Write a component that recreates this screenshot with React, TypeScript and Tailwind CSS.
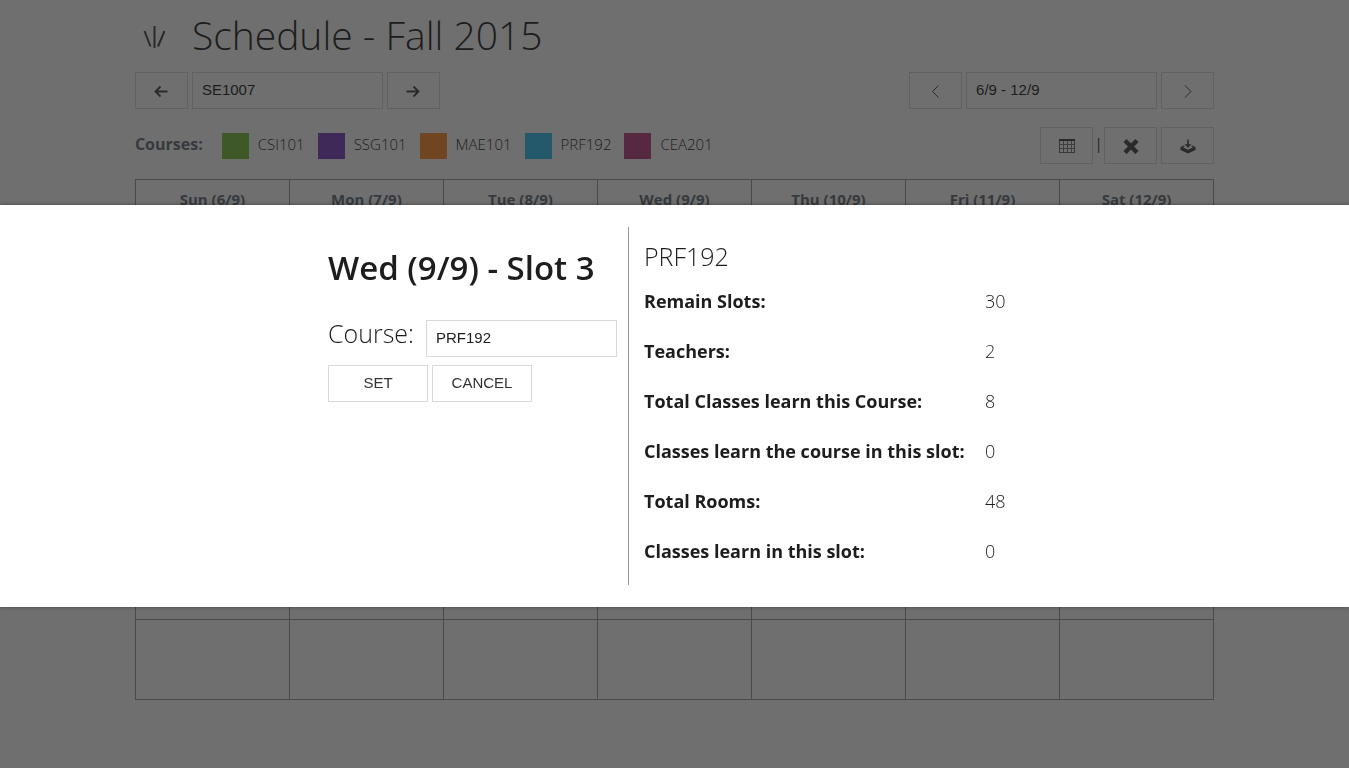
import type { ReactNode } from "react";

const courses = [
  { name: "CSI101", color: "bg-[#7dbf3b]" },
  { name: "SSG101", color: "bg-[#7a41bf]" },
  { name: "MAE101", color: "bg-[#ff8c2e]" },
  { name: "PRF192", color: "bg-[#30c4f4]" },
  { name: "CEA201", color: "bg-[#be4180]" },
];

const days = ["Sun (6/9)", "Mon (7/9)", "Tue (8/9)", "Wed (9/9)", "Thu (10/9)", "Fri (11/9)", "Sat (12/9)"];
const slots = [1, 2, 3, 4, 5, 6];

const stats = [
  ["Remain Slots:", "30"],
  ["Teachers:", "2"],
  ["Total Classes learn this Course:", "8"],
  ["Classes learn the course in this slot:", "0"],
  ["Total Rooms:", "48"],
  ["Classes learn in this slot:", "0"],
];

function IconButton({ label, children }: { label: string; children: ReactNode }) {
  return (
    <button type="button" aria-label={label} className="flex h-[37px] w-[53px] items-center justify-center border border-[#d9d9d9] bg-white text-[#444]">
      {children}
    </button>
  );
}

function Field({ id, label, value }: { id: string; label: string; value: string }) {
  return (
    <input
      id={id}
      aria-label={label}
      defaultValue={value}
      className="h-[37px] w-[191px] border border-[#d9d9d9] bg-white px-[9px] pb-[3px] font-['Liberation_Sans',sans-serif] text-[15px] leading-5 text-[#1d1d1d] outline-none"
    />
  );
}

export default function App() {
  return (
    <div className="min-h-screen bg-white font-['Open_Sans',sans-serif] text-[#1d1d1d]">
      <main className="mx-auto w-4/5">
        <h1 className="flex h-[72px] items-center pb-[2px] text-[39px] leading-[70px] font-light">
          <a href="#home" aria-label="Home" className="mr-[25px] ml-2 text-[#444]">
            <svg width="24" height="26" viewBox="0 0 24 26" fill="none" stroke="currentColor" strokeWidth="2">
              <path d="M1.500 9l6 15.500M11.500 4v22M21.500 9l-6.500 15.500" />
            </svg>
          </a>
          Schedule - Fall 2015
        </h1>
        <div className="flex justify-between">
          <div className="flex gap-1">
            <IconButton label="Previous class">
              <svg width="16" height="16" viewBox="0 0 16 16" fill="none" stroke="currentColor" strokeWidth="1.8">
                <path d="M14.500 8.500H2.500M7.500 3.500l-5 5 5 5" />
              </svg>
            </IconButton>
            <Field id="class" label="Class" value="SE1007" />
            <IconButton label="Next class">
              <svg width="16" height="16" viewBox="0 0 16 16" fill="none" stroke="currentColor" strokeWidth="1.8">
                <path d="M1.500 8.500h12M8.500 3.500l5 5-5 5" />
              </svg>
            </IconButton>
          </div>
          <div className="flex gap-1">
            <IconButton label="Previous week">
              <svg width="16" height="16" viewBox="0 0 16 16" fill="none" stroke="currentColor"><path d="M10.500 2.500l-6 6 6 6" /></svg>
            </IconButton>
            <Field id="week" label="Week" value="6/9 - 12/9" />
            <IconButton label="Next week">
              <svg width="16" height="16" viewBox="0 0 16 16" fill="none" stroke="currentColor"><path d="M5 2.500l6 6-6 6" /></svg>
            </IconButton>
          </div>
        </div>
        <div className="mt-[18px] flex justify-between">
          <div className="flex h-[37px] items-center text-[15px] font-light">
            <strong className="mr-[19px] pb-[3px] text-base font-bold text-[#646e78]">Courses:</strong>
            {courses.map((c) => (
              <span key={c.name} className="mr-[13px] flex items-center gap-[9px]">
                <span className={`h-[26px] w-[27px] ${c.color}`} />
                <span className="pb-[3px]">{c.name}</span>
              </span>
            ))}
          </div>
          <div className="flex">
            <IconButton label="Show table">
              <svg width="16" height="14" viewBox="0 0 16 14" fill="none" stroke="currentColor" shapeRendering="crispEdges">
                <path d="M4.500 2v11M8.500 2v11M12.500 2v11M1 5.500h14M1 9.500h14" strokeOpacity=".7" />
                <path d="M.5 1v12.500h15V1" strokeOpacity=".8" />
                <path d="M0 1h16" strokeWidth="2" />
              </svg>
            </IconButton>
            <span className="w-[11px] text-center text-sm leading-[34px]">|</span>
            <IconButton label="Clear">
              <svg width="16" height="16" viewBox="0 0 16 16" stroke="currentColor" strokeWidth="4.500"><path d="M2 2.500l12 12M14 2.500l-12 12" /></svg>
            </IconButton>
            <span className="w-1" />
            <IconButton label="Save">
              <svg width="16" height="16" viewBox="0 0 16 16" fill="currentColor">
                <path d="M7.200 1.500h1.600v4.800h2.700L8 9.800 4.500 6.300h2.700z" />
                <path d="M3.800 7.500L.5 9v3L8 15.500l7.500-3.500V9l-3.300-1.500-1 .9 2 .9L8 11.700 2.800 9.300l2-.9z" />
              </svg>
            </IconButton>
          </div>
        </div>
        <table className="mt-[15px] w-full table-fixed border-collapse">
          <thead>
            <tr className="h-10">
              {days.map((d) => (
                <th key={d} className="border border-[#999] p-0 text-[15px] font-bold text-[#646e78]">{d}</th>
              ))}
            </tr>
          </thead>
          <tbody>
            {slots.map((s) => (
              <tr key={s} className="h-20">
                {days.map((d) => <td key={d} className="border border-[#999]" />)}
              </tr>
            ))}
          </tbody>
        </table>
      </main>

      <div className="fixed inset-0 bg-[rgba(29,29,29,0.635)] pt-[205px]">
        <section role="dialog" aria-labelledby="slot-title" className="bg-white py-[22px] shadow-[0_0_4px_rgba(0,0,0,0.4)]">
          <div className="mx-auto flex max-w-[693px]">
            <form className="w-[301px] shrink-0 border-r border-[#999]">
              <h2 id="slot-title" className="mt-5 text-[33px] leading-[42px] font-semibold">Wed (9/9) - Slot 3</h2>
              <div className="mt-[31px] flex justify-between pr-[11px]">
                <label htmlFor="course" className="text-[25px] leading-[26px] font-light">Course:</label>
                <Field id="course" label="Course" value="PRF192" />
              </div>
              <div className="mt-2 flex gap-1 font-['Liberation_Sans',sans-serif] text-[15px] text-[#333]">
                <button type="button" className="h-[37px] w-[100px] border border-[#d9d9d9]">SET</button>
                <button type="button" className="h-[37px] w-[100px] border border-[#d9d9d9]">CANCEL</button>
              </div>
            </form>
            <div className="grow pl-[15px]">
              <h3 className="mt-[14px] text-[25px] leading-[30px] font-light">PRF192</h3>
              <dl className="mt-[5px] pb-[9px]">
                {stats.map(([k, v]) => (
                  <div key={k} className="flex h-[50px] items-center">
                    <dt className="w-[341px] text-lg font-bold">{k}</dt>
                    <dd className="text-lg font-light">{v}</dd>
                  </div>
                ))}
              </dl>
            </div>
          </div>
        </section>
      </div>
    </div>
  );
}
